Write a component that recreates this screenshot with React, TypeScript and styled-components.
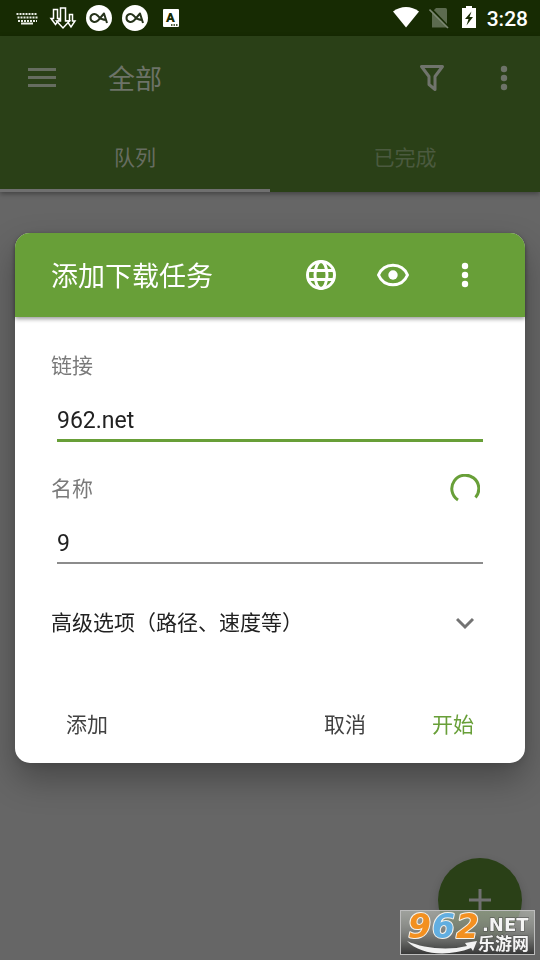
import React, { useState } from "react";
import styled, { createGlobalStyle } from "styled-components";

const GREEN = "#689f38";

const GlobalStyle = createGlobalStyle`
  *, *::before, *::after { box-sizing: border-box; }
  body {
    margin: 0;
    background: #666666;
    font-family: Roboto, "Noto Sans CJK SC", sans-serif;
    font-size: 21px;
    line-height: 24px;
  }
  button, input {
    font: inherit;
    color: inherit;
    border: 0;
    padding: 0;
    background: none;
    outline: none;
  }
  button { cursor: pointer; }
  svg { display: block; flex: none; }
`;

const Page = styled.div`
  min-height: 100vh;
  background: #666666;
`;

const StatusBar = styled.header`
  display: flex;
  justify-content: space-between;
  align-items: center;
  height: 36px;
  padding: 0 12px 0 13px;
  background: #172b03;
  color: #ffffff;
`;

const StatusGroup = styled.div<{ $gap: number }>`
  display: flex;
  align-items: center;
  gap: ${(p) => p.$gap}px;
`;

const Clock = styled.time`
  padding-top: 2px;
  font-weight: 500;
`;

const AppBar = styled.div`
  background: #2a4017;
  color: #6d7368;
  box-shadow: 0 2px 5px rgba(0, 0, 0, 0.35);
`;

const Toolbar = styled.div`
  display: flex;
  align-items: center;
  height: 84px;
`;

const ToolbarTitle = styled.h1`
  flex: 1;
  margin: 0;
  padding: 3px 0 0 24px;
  font-size: 27px;
  line-height: 36px;
  font-weight: 400;
`;

const IconButton = styled.button<{ $width?: number }>`
  display: flex;
  justify-content: center;
  align-items: center;
  width: ${(p) => p.$width ?? 72}px;
  height: 72px;
`;

const Tabs = styled.div`
  display: grid;
  grid-template-columns: 1fr 1fr;
`;

const Tab = styled.button<{ $active?: boolean }>`
  height: 72px;
  padding-top: 6px;
  border-bottom: 3px solid ${(p) => (p.$active ? "#6f6f6f" : "transparent")};
  color: ${(p) => (p.$active ? "#676d61" : "#4b5a3f")};
`;

const DialogLayer = styled.div`
  position: fixed;
  inset: 36px 0 0;
  display: flex;
  align-items: center;
  padding: 0 15px;
`;

const Dialog = styled.form`
  flex: 1;
  border-radius: 15px;
  background: #ffffff;
  color: #212121;
  box-shadow: 0 16px 34px rgba(0, 0, 0, 0.3), 0 2px 10px rgba(0, 0, 0, 0.1);
`;

const DialogHeader = styled.div`
  display: flex;
  align-items: center;
  height: 84px;
  padding: 0 24px 0 36px;
  border-radius: 15px 15px 0 0;
  background: ${GREEN};
  color: #ffffff;
  box-shadow: 0 2px 4px rgba(0, 0, 0, 0.4);
`;

const DialogTitle = styled.h2`
  flex: 1;
  margin: 0;
  padding-top: 3px;
  font-size: 27px;
  line-height: 36px;
  font-weight: 400;
`;

const DialogBody = styled.div`
  display: flex;
  flex-direction: column;
  padding: 34px 36px 0;
`;

const LabelRow = styled.div`
  display: flex;
  align-items: center;
  justify-content: space-between;
  height: 30px;
  padding-right: 9px;
  color: #7a7a7a;
`;

const TextField = styled.input<{ $active?: boolean }>`
  height: ${(p) => (p.$active ? 40 : 39)}px;
  margin: 21px 6px 0;
  border-bottom: ${(p) => (p.$active ? `3px solid ${GREEN}` : "2px solid #8c8c8c")};
  font-size: 23px;
`;

const FieldGroup = styled.div`
  display: flex;
  flex-direction: column;
  margin-bottom: 32px;
`;

const AdvancedButton = styled.button`
  display: flex;
  align-items: center;
  justify-content: space-between;
  height: 48px;
  margin-top: 3px;
  padding-right: 15px;
  text-align: left;
`;

const DialogFooter = styled.div`
  display: flex;
  align-items: center;
  gap: 36px;
  padding: 54px 36px 14px;
`;

const ActionButton = styled.button<{ $primary?: boolean; $first?: boolean }>`
  height: 48px;
  padding: 0 15px;
  margin-right: ${(p) => (p.$first ? "auto" : "0")};
  color: ${(p) => (p.$primary ? GREEN : "#424242")};
`;

const Fab = styled.button`
  position: fixed;
  right: 18px;
  bottom: 18px;
  display: flex;
  justify-content: center;
  align-items: center;
  width: 84px;
  height: 84px;
  border-radius: 50%;
  background: #2a4017;
  box-shadow: 0 4px 10px rgba(0, 0, 0, 0.2);
`;

const Watermark = styled.div`
  position: fixed;
  right: 5px;
  bottom: 5px;
`;

const KeyboardIcon = () => (
  <svg width="28" height="28" viewBox="0 0 28 28" fill="none" stroke="#e9ede5" strokeWidth="2">
    <path d="M3.500 10h21" strokeDasharray="2 1" />
    <path d="M4.500 13.500h20" strokeDasharray="2 1" />
    <path d="M5 17h19" strokeDasharray="2 1" />
    <path d="M8 19.500h12" />
  </svg>
);

const ArrowsIcon = () => (
  <svg width="28" height="28" viewBox="0 0 28 28" stroke="#ffffff" strokeWidth="1.500" fill="#172b03">
    <path d="M4.500 5.500h4v9h2.500l-4.500 6-4.500-6h2.500z" />
    <path d="M20.500 10.500h3v6.500h2.500l-4 6-4-6h2.500z" />
    <path d="M11.500 4h5v13h4l-6.500 7-6.500-7h4z" />
  </svg>
);

const LoopAIcon = () => (
  <svg width="28" height="28" viewBox="0 0 28 28" fill="none">
    <circle cx="14" cy="14" r="13" fill="#ffffff" />
    <path
      d="M22 19L19 9.500L13 16.500C10.500 19 5.500 18 5.500 14C5.500 10 10 9 12.500 11.500C14.500 13.500 16 16 21 16"
      stroke="#26331b"
      strokeWidth="2"
      strokeLinejoin="round"
    />
  </svg>
);

const LetterIcon = () => (
  <svg width="28" height="28" viewBox="0 0 28 28">
    <rect x="6" y="5" width="16" height="18" rx="1" fill="#ffffff" />
    <text x="13.500" y="18" textAnchor="middle" fontFamily="Roboto" fontSize="13" fontWeight="900" fill="#172b03">
      A
    </text>
    <path d="M14 21h7" stroke="#172b03" strokeWidth="1.500" strokeDasharray="1.500 1" />
  </svg>
);

const WifiIcon = () => (
  <svg width="28" height="28" viewBox="0 0 28 28">
    <path d="M1 7.500C8.500 1.500 19.500 1.500 27 7.500L14 23.500z" fill="#ffffff" />
  </svg>
);

const NoSimIcon = () => (
  <svg width="22" height="28" viewBox="0 0 22 28">
    <path d="M7 4h9.500q1.500 0 1.500 1.500v18H3V8z" fill="#5c6b4f" />
    <path d="M1.500 4l18 19" stroke="#172b03" strokeWidth="2" />
    <path d="M.5 5.500L19 24" stroke="#7c8873" strokeWidth="1.600" />
  </svg>
);

const BatteryIcon = () => (
  <svg width="18" height="28" viewBox="0 0 18 28">
    <path d="M6 2h6v2h4v20H2V4h4z" fill="#ffffff" />
    <path d="M11.500 7.500L5 15h3.500L6.500 21.500 13 13H9.500z" fill="#172b03" />
  </svg>
);

const MenuIcon = () => (
  <svg width="28" height="28" viewBox="0 0 28 28" stroke="#666d60" strokeWidth="3">
    <path d="M0 5.500h28M0 13.500h28M0 21.500h28" />
  </svg>
);

const FilterIcon = () => (
  <svg width="28" height="28" viewBox="0 0 28 28" fill="none" stroke="#70746c" strokeWidth="3">
    <path d="M3.500 2.500h21L17 12.500v13l-6-5v-8z" strokeLinejoin="round" />
  </svg>
);

const MoreIcon = () => (
  <svg width="24" height="30" viewBox="0 0 24 30" fill="currentColor">
    <circle cx="12" cy="6" r="3.200" />
    <circle cx="12" cy="15" r="3.200" />
    <circle cx="12" cy="24" r="3.200" />
  </svg>
);

const GlobeIcon = () => (
  <svg width="36" height="36" viewBox="0 0 36 36" fill="none" stroke="#ffffff" strokeWidth="3">
    <circle cx="18" cy="18" r="13.500" />
    <ellipse cx="18" cy="18" rx="6" ry="13.500" />
    <path d="M5.500 13.500h25M5.500 22.500h25" />
  </svg>
);

const EyeIcon = () => (
  <svg width="36" height="36" viewBox="0 0 36 36">
    <path
      d="M3.500 18C9 5 27 5 32.500 18C27 31 9 31 3.500 18z"
      fill="none"
      stroke="#ffffff"
      strokeWidth="3"
      strokeLinejoin="round"
    />
    <circle cx="18" cy="18" r="4.700" fill="#ffffff" />
  </svg>
);

const Spinner = () => (
  <svg width="30" height="30" viewBox="0 0 30 30" role="img" aria-label="加载中">
    <path d="M8 26A13.500 13.500 0 1 1 25.500 23.500" fill="none" stroke={GREEN} strokeWidth="3" />
  </svg>
);

const ChevronIcon = () => (
  <svg width="18" height="18" viewBox="0 0 18 18" fill="none" stroke="#737373" strokeWidth="3">
    <path d="M1 5l8 8 8-8" />
  </svg>
);

const PlusIcon = () => (
  <svg width="22" height="22" viewBox="0 0 22 22" stroke="#707070" strokeWidth="3">
    <path d="M11 0v22M0 11h22" />
  </svg>
);

const LogoSvg = styled.svg`
  overflow: visible;
`;

const digits = [
  { char: "9", x: 8, color: "#f39020" },
  { char: "6", x: 32, color: "#62aee0" },
  { char: "2", x: 56, color: "#f39020" },
];

const SiteLogo = () => (
  <LogoSvg width="135" height="45" viewBox="0 0 135 45">
    <defs>
      <linearGradient id="plate" x1="0" y1="0" x2="0" y2="1">
        <stop offset="0" stopColor="#c4c8c0" stopOpacity="0.6" />
        <stop offset="0.5" stopColor="#858783" stopOpacity="0.8" />
        <stop offset="1" stopColor="#353535" />
      </linearGradient>
    </defs>
    <rect x="0.500" y="0.500" width="134" height="44" fill="url(#plate)" stroke="#bdbdbd" />
    <g
      fontFamily="DejaVu Sans"
      fontWeight="700"
      fontStyle="italic"
      fontSize="33"
      stroke="#f7f3ec"
      strokeWidth="2"
      strokeLinejoin="round"
      paintOrder="stroke"
    >
      {digits.map((d) => (
        <text key={d.char} x={d.x} y="28" fill={d.color}>
          {d.char}
        </text>
      ))}
    </g>
    <path d="M7 31C22 38 47 41 67 36L65 33 77 31 73 41 71 38C48 47 20 45 7 31z" fill="#f2f2f2" />
    <g fill="#f4f4f4" stroke="#4a4a4a" strokeWidth="1" paintOrder="stroke" fontWeight="700">
      <text x="82" y="21" fontFamily="DejaVu Sans" fontSize="18">
        .NET
      </text>
      <text x="78" y="40" fontFamily="Noto Sans CJK SC" fontSize="17">
        乐游网
      </text>
    </g>
  </LogoSvg>
);

export default function App() {
  const [link, setLink] = useState("962.net");
  const [name, setName] = useState("9");

  return (
    <>
      <GlobalStyle />
      <Page>
        <StatusBar>
          <StatusGroup $gap={8}>
            <KeyboardIcon />
            <ArrowsIcon />
            <LoopAIcon />
            <LoopAIcon />
            <LetterIcon />
          </StatusGroup>
          <StatusGroup $gap={9}>
            <WifiIcon />
            <NoSimIcon />
            <BatteryIcon />
            <Clock>3:28</Clock>
          </StatusGroup>
        </StatusBar>
        <AppBar>
          <Toolbar>
            <IconButton $width={84} aria-label="菜单">
              <MenuIcon />
            </IconButton>
            <ToolbarTitle>全部</ToolbarTitle>
            <IconButton aria-label="筛选">
              <FilterIcon />
            </IconButton>
            <IconButton aria-label="更多">
              <MoreIcon />
            </IconButton>
          </Toolbar>
          <Tabs>
            <Tab $active>队列</Tab>
            <Tab>已完成</Tab>
          </Tabs>
        </AppBar>
      </Page>
      <Fab aria-label="新建">
        <PlusIcon />
      </Fab>
      <DialogLayer>
        <Dialog role="dialog" aria-labelledby="dialog-title" onSubmit={(e) => e.preventDefault()}>
          <DialogHeader>
            <DialogTitle id="dialog-title">添加下载任务</DialogTitle>
            <IconButton type="button" aria-label="浏览器">
              <GlobeIcon />
            </IconButton>
            <IconButton type="button" aria-label="预览">
              <EyeIcon />
            </IconButton>
            <IconButton type="button" aria-label="更多选项">
              <MoreIcon />
            </IconButton>
          </DialogHeader>
          <DialogBody>
            <FieldGroup>
              <LabelRow>
                <label htmlFor="link">链接</label>
              </LabelRow>
              <TextField id="link" $active value={link} onChange={(e) => setLink(e.target.value)} />
            </FieldGroup>
            <FieldGroup>
              <LabelRow>
                <label htmlFor="name">名称</label>
                <Spinner />
              </LabelRow>
              <TextField id="name" value={name} onChange={(e) => setName(e.target.value)} />
            </FieldGroup>
            <AdvancedButton type="button">
              高级选项（路径、速度等）
              <ChevronIcon />
            </AdvancedButton>
          </DialogBody>
          <DialogFooter>
            <ActionButton type="button" $first>
              添加
            </ActionButton>
            <ActionButton type="button">取消</ActionButton>
            <ActionButton type="submit" $primary>
              开始
            </ActionButton>
          </DialogFooter>
        </Dialog>
      </DialogLayer>
      <Watermark>
        <SiteLogo />
      </Watermark>
    </>
  );
}
